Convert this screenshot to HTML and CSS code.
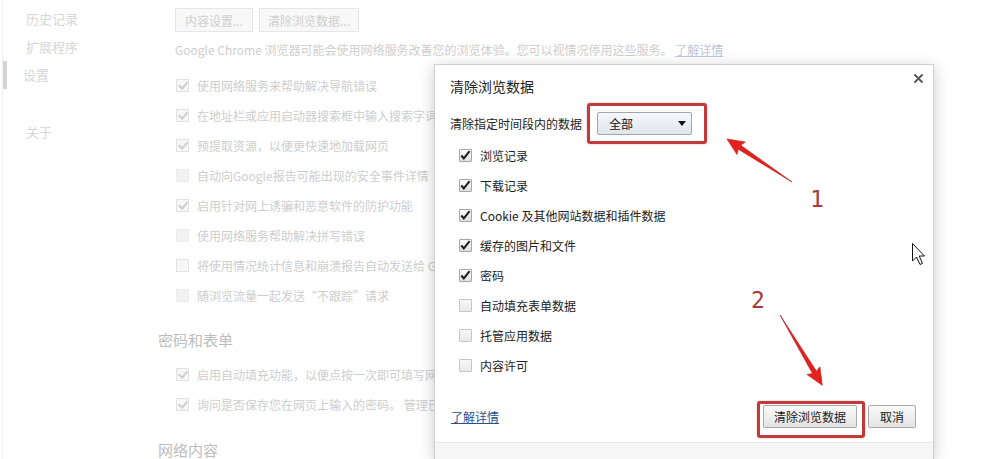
FILE: index.html
```html
<!DOCTYPE html>
<html lang="zh-CN">
<head>
  <meta charset="UTF-8">
  <title>设置 - 清除浏览数据</title>
  <link rel="stylesheet" href="styles.css">
</head>
<body>
  <div class="page">
    <nav class="side">
      <div class="side-item">历史记录</div>
      <div class="side-item">扩展程序</div>
      <div class="side-item active">设置</div>
      <div class="side-item about">关于</div>
    </nav>

    <main class="settings">
      <div class="section">
        <div class="btn-row">
          <button class="bg-btn">内容设置...</button>
          <button class="bg-btn wide">清除浏览数据...</button>
        </div>
        <p class="desc">Google Chrome 浏览器可能会使用网络服务改善您的浏览体验。您可以视情况停用这些服务。 <a class="bg-link">了解详情</a></p>
        <div class="opt"><span class="bcb on"></span>使用网络服务来帮助解决导航错误</div>
        <div class="opt"><span class="bcb on"></span>在地址栏或应用启动器搜索框中输入搜索字词</div>
        <div class="opt"><span class="bcb on"></span>预提取资源，以便更快速地加载网页</div>
        <div class="opt"><span class="bcb off"></span>自动向Google报告可能出现的安全事件详情</div>
        <div class="opt"><span class="bcb on"></span>启用针对网上诱骗和恶意软件的防护功能</div>
        <div class="opt"><span class="bcb off"></span>使用网络服务帮助解决拼写错误</div>
        <div class="opt"><span class="bcb"></span>将使用情况统计信息和崩溃报告自动发送给 G</div>
        <div class="opt"><span class="bcb off"></span>随浏览流量一起发送“不跟踪”请求</div>
      </div>

      <h3 class="sec-title">密码和表单</h3>
      <div class="section tight">
        <div class="opt"><span class="bcb on"></span>启用自动填充功能，以便点按一次即可填写网</div>
        <div class="opt"><span class="bcb on"></span>询问是否保存您在网页上输入的密码。 管理已</div>
      </div>

      <h3 class="sec-title last">网络内容</h3>
    </main>
  </div>

  <div class="dialog">
    <div class="dlg-head">
      <div class="dlg-title">清除浏览数据</div>
      <svg class="dlg-close" width="9" height="9" viewBox="0 0 9 9">
        <path d="M1 1 L8 8 M8 1 L1 8" stroke="#555" stroke-width="1.8" stroke-linecap="round"/>
      </svg>
    </div>

    <div class="time-row">
      <span>清除指定时间段内的数据</span>
      <div class="select">
        <span>全部</span>
        <span class="caret"></span>
      </div>
    </div>

    <div class="items">
      <label class="item"><span class="cb checked"><svg viewBox="0 0 13 13"><path d="M2.5 6.5 L5.2 9.6 L11.5 1.8"/></svg></span>浏览记录</label>
      <label class="item"><span class="cb checked"><svg viewBox="0 0 13 13"><path d="M2.5 6.5 L5.2 9.6 L11.5 1.8"/></svg></span>下载记录</label>
      <label class="item"><span class="cb checked"><svg viewBox="0 0 13 13"><path d="M2.5 6.5 L5.2 9.6 L11.5 1.8"/></svg></span>Cookie 及其他网站数据和插件数据</label>
      <label class="item"><span class="cb checked"><svg viewBox="0 0 13 13"><path d="M2.5 6.5 L5.2 9.6 L11.5 1.8"/></svg></span>缓存的图片和文件</label>
      <label class="item"><span class="cb checked"><svg viewBox="0 0 13 13"><path d="M2.5 6.5 L5.2 9.6 L11.5 1.8"/></svg></span>密码</label>
      <label class="item"><span class="cb"></span>自动填充表单数据</label>
      <label class="item"><span class="cb"></span>托管应用数据</label>
      <label class="item"><span class="cb"></span>内容许可</label>
    </div>

    <div class="dlg-foot">
      <a class="more">了解详情</a>
      <div class="actions">
        <button class="dbtn wide">清除浏览数据</button>
        <button class="dbtn">取消</button>
      </div>
    </div>
    <div class="dlg-bottom"></div>
  </div>

  <!-- annotations drawn over the screenshot -->
  <div class="mark mark-1"></div>
  <div class="mark mark-2"></div>
  <svg class="notes" width="1000" height="459" viewBox="0 0 1000 459">
    <polygon class="arrow" points="0,0 63,-2.3 61,-7.5 78,0 61,7.5 63,2.3" transform="translate(792 182) rotate(-146.5)"/>
    <polygon class="arrow" points="0,0 67,-2.3 65,-7.5 82,0 65,7.5 67,2.3" transform="translate(780 315) rotate(59)"/>
    <text class="num" x="810" y="207">1</text>
    <text class="num" x="751" y="308">2</text>
    <polygon class="cursor" points="912.5,243.5 912.5,261 916.5,257 920,264.5 922.5,263.3 919.2,256 924.5,256"/>
  </svg>
</body>
</html>
```

FILE: styles.css
```css
html, body {
  margin: 0;
  padding: 0;
  height: 100%;
  overflow: hidden;
}

body {
  background: #fff;
  font-family: "Noto Sans CJK SC", "Noto Sans", sans-serif;
  font-size: 12px;
  color: #333;
  position: relative;
}

/* faded settings page behind the dialog */
.page {
  display: flex;
  height: 459px;
  overflow: hidden;
  color: #cecece;
  border-left: 1px solid #f0f0f0;
  margin-left: 2px;
}

.side {
  width: 155px;
  padding-top: 5px;
  flex-shrink: 0;
  color: #d6d6d6;
}

.side-item {
  font-size: 13px;
  line-height: 28px;
  padding-left: 23px;
}

.side-item.active {
  border-left: 7px solid #d4d4d4;
  padding-left: 16px;
  margin-left: -3px;
}

.side-item.about {
  margin-top: 29px;
}

.settings {
  flex: 1;
  white-space: nowrap;
}

.section {
  padding-left: 17px;
}

.btn-row {
  display: flex;
  gap: 6px;
  padding-top: 8px;
}

.bg-btn {
  height: 24px;
  width: 78px;
  border: 1px solid #e6e6e6;
  background: #f8f8f8;
  color: #cfcfcf;
  font-family: inherit;
  font-size: 12px;
  padding: 0;
}

.bg-btn.wide {
  width: 100px;
}

.desc {
  margin: 8px 0 10px;
  line-height: 20px;
}

.bg-link {
  color: #bcc6da;
  text-decoration: underline;
}

/* rows are hidden behind the dialog from x=434 */
.opt {
  width: 260px;
  overflow: hidden;
  height: 30px;
  display: flex;
  align-items: center;
  gap: 8px;
}

.bcb {
  width: 11px;
  height: 11px;
  border: 1px solid #e2e2e2;
  background: #f7f7f7;
  margin-left: 1px;
  position: relative;
  flex-shrink: 0;
}

.bcb.on::after {
  content: "";
  position: absolute;
  left: 3px;
  top: 0;
  width: 4px;
  height: 7px;
  border: solid #d0d0d0;
  border-width: 0 2px 2px 0;
  transform: rotate(40deg);
}

.bcb.off {
  border-color: #ededed;
  background: #f2f2f2;
}

.sec-title {
  margin: 20px 0 0;
  font-size: 15px;
  font-weight: normal;
  line-height: 20px;
  color: #bdbdbd;
}

.section.tight {
  margin-top: 9px;
}

.sec-title.last {
  margin-top: 22px;
  line-height: 18px;
}

/* dialog */
.dialog {
  position: absolute;
  left: 434px;
  top: 64px;
  width: 500px;
  height: 395px;
  background: #fff;
  border: 1px solid #cfcfcf;
  border-bottom: 0;
  box-sizing: border-box;
  box-shadow: 0 3px 14px rgba(0, 0, 0, 0.22);
  display: flex;
  flex-direction: column;
}

.dlg-head {
  display: flex;
  justify-content: space-between;
  align-items: flex-start;
  padding: 11px 10px 0 15px;
}

.dlg-title {
  font-size: 14px;
  line-height: 20px;
  color: #222;
}

.dlg-close {
  margin-top: -2px;
}

.time-row {
  display: flex;
  align-items: center;
  gap: 15px;
  margin-top: 16px;
  padding-left: 15px;
  color: #222;
}

.select {
  width: 95px;
  height: 23px;
  box-sizing: border-box;
  border: 1px solid #9ea6b2;
  border-radius: 2px;
  background: linear-gradient(#f6f8fb, #dfe5ec);
  display: flex;
  align-items: center;
  justify-content: space-between;
  padding: 0 5px 0 11px;
  color: #111;
}

.caret {
  width: 0;
  height: 0;
  border-left: 4px solid transparent;
  border-right: 4px solid transparent;
  border-top: 5px solid #111;
}

.items {
  margin-top: 6px;
  padding-left: 24px;
}

.item {
  height: 29.9px;
  display: flex;
  align-items: center;
  gap: 8px;
  color: #222;
}

.cb {
  width: 13px;
  height: 13px;
  box-sizing: border-box;
  border: 1px solid #a7a7a7;
  border-radius: 1px;
  background: linear-gradient(#fbfbfb, #dedede);
  display: flex;
}

.cb svg {
  width: 13px;
  height: 13px;
  margin: -1px 0 0 -1px;
  fill: none;
  stroke: #1e1e1e;
  stroke-width: 2.2;
}

.item .cb:not(.checked) {
  border-color: #c6c6c6;
  background: linear-gradient(#f8f8f8, #e9e9e9);
}

.dlg-foot {
  display: flex;
  justify-content: space-between;
  align-items: center;
  margin-top: 25px;
  padding: 0 17px 0 16px;
}

.more {
  color: #2b4f8e;
  text-decoration: underline;
}

.actions {
  display: flex;
  gap: 11px;
}

.dbtn {
  height: 23px;
  width: 48px;
  border: 1px solid #aaaaaa;
  border-radius: 2px;
  background: linear-gradient(#f9f9f9, #e4e4e4);
  font-family: inherit;
  font-size: 12px;
  color: #222;
  padding: 0;
}

.dbtn.wide {
  width: 94px;
}

.dlg-bottom {
  margin-top: 14px;
  flex: 1;
  border-top: 1px solid #e6e6e6;
  background: #f6f6f6;
}

/* red annotation boxes, arrows and numbers */
.mark {
  position: absolute;
  box-sizing: border-box;
  border: 3px solid #c13a3c;
  border-radius: 3px;
  box-shadow: 0 0 2px rgba(200, 40, 40, 0.4);
}

.mark-1 {
  left: 587px;
  top: 103px;
  width: 120px;
  height: 41px;
}

.mark-2 {
  left: 757px;
  top: 401px;
  width: 108px;
  height: 37px;
}

.notes {
  position: absolute;
  left: 0;
  top: 0;
  pointer-events: none;
}

.arrow {
  fill: #e3221f;
  stroke: #c41b18;
  stroke-width: 0.6;
  stroke-linejoin: round;
}

.num {
  font-family: "DejaVu Sans Mono", "Liberation Mono", monospace;
  font-size: 23px;
  fill: #a93a3b;
}

.cursor {
  fill: #fff;
  stroke: #111;
  stroke-width: 1;
  stroke-linejoin: miter;
}
```
